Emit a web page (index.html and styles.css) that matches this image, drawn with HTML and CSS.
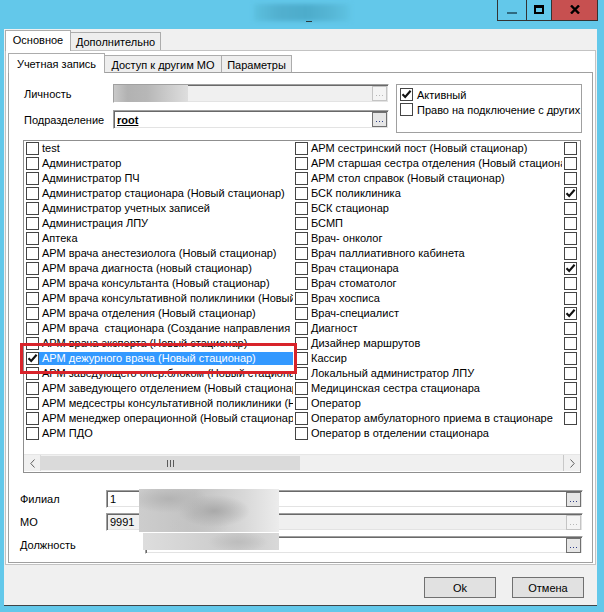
FILE: index.html
```html
<!DOCTYPE html>
<html lang="ru">
<head>
<meta charset="utf-8">
<title>Учетная запись</title>
<link rel="stylesheet" href="styles.css">
</head>
<body>
<div class="window">
  <div class="titlebar">
    <div class="title">
      <div class="title-blur"></div>
      <div class="title-mark"></div>
    </div>
    <div class="controls">
      <div class="ctl ctl-min"><span class="min-glyph"></span></div>
      <div class="ctl ctl-max"><span class="max-glyph"></span></div>
      <div class="ctl ctl-close">
        <svg width="10" height="9" viewBox="0 0 10 9"><path d="M1 0.5 L9 8.5 M9 0.5 L1 8.5" stroke="#000" stroke-width="2.4" fill="none"/></svg>
      </div>
    </div>
  </div>

  <div class="client">
    <div class="tabs outer-tabs">
      <div class="tab sel t-main">Основное</div>
      <div class="tab t-extra">Дополнительно</div>
    </div>
    <div class="outer-panel">
      <div class="tabs inner-tabs">
        <div class="tab sel t-acc">Учетная запись</div>
        <div class="tab t-access">Доступ к другим МО</div>
        <div class="tab t-params">Параметры</div>
      </div>
      <div class="inner-panel">
        <div class="top">
          <div class="form-rows">
            <div class="lbl">Личность</div>
            <div class="field disabled">
              <div class="person-blur"></div>
              <div class="fill"></div>
              <div class="dots-btn off"><svg width="13" height="13" viewBox="0 0 13 13"><rect x="3" y="8" width="1" height="1"/><rect x="6" y="8" width="1" height="1"/><rect x="9" y="8" width="1" height="1"/></svg></div>
            </div>
            <div class="lbl">Подразделение</div>
            <div class="field">
              <div class="fill"><span class="root">root</span></div>
              <div class="dots-btn"><svg width="13" height="13" viewBox="0 0 13 13"><rect x="3" y="8" width="1" height="1"/><rect x="6" y="8" width="1" height="1"/><rect x="9" y="8" width="1" height="1"/></svg></div>
            </div>
          </div>
          <div class="groupbox">
            <div class="gb-row"><span class="cb checked"><svg width="11" height="11" viewBox="0 0 11 11"><path d="M1.5 5.2 L4.2 8 L9.6 1.8" stroke="#111" stroke-width="2.1" fill="none"/></svg></span><span class="gb-text">Активный</span></div>
            <div class="gb-row"><span class="cb"></span><span class="gb-text">Право на подключение с других МО</span></div>
          </div>
        </div>

        <div class="list">
          <div class="cols">
            <div class="col">
              <div class="row"><span class="cb"></span><span class="txt">test</span></div>
              <div class="row"><span class="cb"></span><span class="txt">Администратор</span></div>
              <div class="row"><span class="cb"></span><span class="txt">Администратор ПЧ</span></div>
              <div class="row"><span class="cb"></span><span class="txt">Администратор стационара (Новый стационар)</span></div>
              <div class="row"><span class="cb"></span><span class="txt">Администратор учетных записей</span></div>
              <div class="row"><span class="cb"></span><span class="txt">Администрация ЛПУ</span></div>
              <div class="row"><span class="cb"></span><span class="txt">Аптека</span></div>
              <div class="row"><span class="cb"></span><span class="txt">АРМ врача анестезиолога (Новый стационар)</span></div>
              <div class="row"><span class="cb"></span><span class="txt">АРМ врача диагноста (новый стационар)</span></div>
              <div class="row"><span class="cb"></span><span class="txt">АРМ врача консультанта (Новый стационар)</span></div>
              <div class="row"><span class="cb"></span><span class="txt">АРМ врача консультативной поликлиники (Новый стационар)</span></div>
              <div class="row"><span class="cb"></span><span class="txt">АРМ врача отделения (Новый стационар)</span></div>
              <div class="row"><span class="cb"></span><span class="txt">АРМ врача &nbsp;стационара (Создание направления на госпитализацию)</span></div>
              <div class="row"><span class="cb"></span><span class="txt">АРМ врача эксперта (Новый стационар)</span></div>
              <div class="row"><span class="cb checked"><svg width="11" height="11" viewBox="0 0 11 11"><path d="M1.5 5.2 L4.2 8 L9.6 1.8" stroke="#111" stroke-width="2.1" fill="none"/></svg></span><span class="txt sel">АРМ дежурного врача (Новый стационар)</span></div>
              <div class="row"><span class="cb"></span><span class="txt">АРМ заведующего опер.блоком (Новый стационар)</span></div>
              <div class="row"><span class="cb"></span><span class="txt">АРМ заведующего отделением (Новый стационар)</span></div>
              <div class="row"><span class="cb"></span><span class="txt">АРМ медсестры консультативной поликлиники (Новый стационар)</span></div>
              <div class="row"><span class="cb"></span><span class="txt">АРМ менеджер операционной (Новый стационар)</span></div>
              <div class="row"><span class="cb"></span><span class="txt">АРМ ПДО</span></div>
            </div>
            <div class="col">
              <div class="row"><span class="cb"></span><span class="txt">АРМ сестринский пост (Новый стационар)</span></div>
              <div class="row"><span class="cb"></span><span class="txt">АРМ старшая сестра отделения (Новый стационар)</span></div>
              <div class="row"><span class="cb"></span><span class="txt">АРМ стол справок (Новый стационар)</span></div>
              <div class="row"><span class="cb"></span><span class="txt">БСК поликлиника</span></div>
              <div class="row"><span class="cb"></span><span class="txt">БСК стационар</span></div>
              <div class="row"><span class="cb"></span><span class="txt">БСМП</span></div>
              <div class="row"><span class="cb"></span><span class="txt">Врач- онколог</span></div>
              <div class="row"><span class="cb"></span><span class="txt">Врач паллиативного кабинета</span></div>
              <div class="row"><span class="cb"></span><span class="txt">Врач стационара</span></div>
              <div class="row"><span class="cb"></span><span class="txt">Врач стоматолог</span></div>
              <div class="row"><span class="cb"></span><span class="txt">Врач хосписа</span></div>
              <div class="row"><span class="cb"></span><span class="txt">Врач-специалист</span></div>
              <div class="row"><span class="cb"></span><span class="txt">Диагност</span></div>
              <div class="row"><span class="cb"></span><span class="txt">Дизайнер маршрутов</span></div>
              <div class="row"><span class="cb"></span><span class="txt">Кассир</span></div>
              <div class="row"><span class="cb"></span><span class="txt">Локальный администратор ЛПУ</span></div>
              <div class="row"><span class="cb"></span><span class="txt">Медицинская сестра стационара</span></div>
              <div class="row"><span class="cb"></span><span class="txt">Оператор</span></div>
              <div class="row"><span class="cb"></span><span class="txt">Оператор амбулаторного приема в стационаре</span></div>
              <div class="row"><span class="cb"></span><span class="txt">Оператор в отделении стационара</span></div>
            </div>
            <div class="col col-last">
              <div class="row"><span class="cb"></span></div>
              <div class="row"><span class="cb"></span></div>
              <div class="row"><span class="cb"></span></div>
              <div class="row"><span class="cb checked"><svg width="11" height="11" viewBox="0 0 11 11"><path d="M1.5 5.2 L4.2 8 L9.6 1.8" stroke="#111" stroke-width="2.1" fill="none"/></svg></span></div>
              <div class="row"><span class="cb"></span></div>
              <div class="row"><span class="cb"></span></div>
              <div class="row"><span class="cb"></span></div>
              <div class="row"><span class="cb"></span></div>
              <div class="row"><span class="cb checked"><svg width="11" height="11" viewBox="0 0 11 11"><path d="M1.5 5.2 L4.2 8 L9.6 1.8" stroke="#111" stroke-width="2.1" fill="none"/></svg></span></div>
              <div class="row"><span class="cb"></span></div>
              <div class="row"><span class="cb"></span></div>
              <div class="row"><span class="cb checked"><svg width="11" height="11" viewBox="0 0 11 11"><path d="M1.5 5.2 L4.2 8 L9.6 1.8" stroke="#111" stroke-width="2.1" fill="none"/></svg></span></div>
              <div class="row"><span class="cb"></span></div>
              <div class="row"><span class="cb"></span></div>
              <div class="row"><span class="cb"></span></div>
              <div class="row"><span class="cb"></span></div>
              <div class="row"><span class="cb"></span></div>
              <div class="row"><span class="cb"></span></div>
              <div class="row"><span class="cb"></span></div>
            </div>
          </div>
          <div class="hscroll">
            <div class="sarrow"><svg width="5" height="9" viewBox="0 0 5 9"><path d="M4.5 0.5 L0.8 4.5 L4.5 8.5" stroke="#606060" stroke-width="1" fill="none"/></svg></div>
            <div class="thumb"><span class="grip"></span><span class="grip"></span><span class="grip"></span></div>
            <div class="track"></div>
            <div class="sarrow right"><svg width="5" height="9" viewBox="0 0 5 9"><path d="M0.5 0.5 L4.2 4.5 L0.5 8.5" stroke="#606060" stroke-width="1" fill="none"/></svg></div>
          </div>
        </div>

        <div class="bottom">
          <div class="lbl">Филиал</div>
          <div class="field"><div class="fill">1</div><div class="dots-btn"><svg width="13" height="13" viewBox="0 0 13 13"><rect x="3" y="8" width="1" height="1"/><rect x="6" y="8" width="1" height="1"/><rect x="9" y="8" width="1" height="1"/></svg></div></div>
          <div class="lbl">МО</div>
          <div class="field disabled"><div class="fill">9991</div><div class="dots-btn off"><svg width="13" height="13" viewBox="0 0 13 13"><rect x="3" y="8" width="1" height="1"/><rect x="6" y="8" width="1" height="1"/><rect x="9" y="8" width="1" height="1"/></svg></div></div>
          <div class="lbl">Должность</div>
          <div class="field post"><div class="fill"></div><div class="dots-btn"><svg width="13" height="13" viewBox="0 0 13 13"><rect x="3" y="8" width="1" height="1"/><rect x="6" y="8" width="1" height="1"/><rect x="9" y="8" width="1" height="1"/></svg></div></div>
        </div>

        <div class="blur-a"></div>
        <div class="blur-b"></div>
        <div class="mark"></div>
      </div>
    </div>
    <div class="footer">
      <button class="btn">Ok</button>
      <button class="btn">Отмена</button>
    </div>
  </div>
</div>
</body>
</html>
```

FILE: styles.css
```css
* { box-sizing: border-box; margin: 0; padding: 0; }
html, body { width: 604px; height: 612px; overflow: hidden; }
body {
  background: #63c8ea;
  font-family: "Liberation Sans", Arial, sans-serif;
  font-size: 11px;
  letter-spacing: 0;
  color: #000;
}
.window { width: 604px; height: 612px; display: flex; flex-direction: column; }

/* title bar */
.titlebar { height: 29px; flex: none; display: flex; align-items: flex-start; }
.title { position: relative; margin: 4px 0 0 254px; width: 96px; height: 17px; }
.title-blur {
  width: 96px; height: 17px;
  background: linear-gradient(90deg, #5cc0df 0%, #52b0cf 25%, #4daccb 55%, #56b6d5 80%, #5fc3e3 100%);
  filter: blur(2px);
}
.title-mark { position: absolute; left: 52px; top: 17px; width: 6px; height: 1px; background: #2a3b40; }
.controls { margin-left: auto; margin-right: 6px; display: flex; height: 21px; }
.ctl {
  height: 21px; border: 1px solid #333; border-top: none;
  display: flex; align-items: center; justify-content: center;
}
.ctl + .ctl { margin-left: -1px; }
.ctl-min { width: 30px; }
.ctl-max { width: 26px; }
.ctl-close { width: 47px; background: #c75050; }
.min-glyph { width: 10px; height: 2px; background: #2f6a80; margin-top: 5px; }
.max-glyph { width: 10px; height: 9px; border: 2px solid #000; border-top-width: 3px; margin-top: -1px; }
.ctl-close svg { margin-top: -1px; }

/* client area */
.client {
  margin-left: 4px; width: 593px; height: 577px; flex: none;
  background: #f0f0f0; border-bottom: 1px solid #3f4548;
  display: flex; flex-direction: column;
}
.tabs { display: flex; align-items: flex-end; flex: none; }
.outer-tabs { height: 21px; padding-left: 1px; }
.inner-tabs { height: 20px; }
.tab {
  border: 1px solid #acacac; border-bottom: none;
  background: #eeeeee; text-align: center; white-space: nowrap;
  line-height: 15px;
}
.tab + .tab { margin-left: -1px; }
.tab.sel {
  position: relative; z-index: 1; background: #fff; margin-bottom: -1px;
}
.outer-tabs .tab { height: 18px; padding-top: 2px; }
.outer-tabs .tab.sel { height: 21px; padding-top: 2px; }
.t-main { width: 66px; }
.t-extra { width: 91px; }
.inner-tabs .tab { height: 17px; padding-top: 2px; }
.inner-tabs .tab.sel { height: 20px; padding-top: 3px; }
.t-acc { width: 97px; }
.t-access { width: 118px; }
.t-params { width: 71px; }

.outer-panel {
  margin-left: 1px; width: 591px; height: 515px; flex: none;
  background: #fff; border: 1px solid #c3c3c3;
  padding: 1px 2px 2px 2px;
  display: flex; flex-direction: column;
}
.inner-panel {
  position: relative;
  width: 585px; height: 491px; flex: none;
  background: #fff; border: 1px solid #a0a0a0;
}

/* top form */
.top { display: flex; padding: 11px 0 0 15px; }
.form-rows { display: grid; grid-template-columns: 89px 276px; grid-template-rows: 19px 19px; row-gap: 7px; }
.lbl { display: flex; align-items: center; white-space: nowrap; }
.field {
  display: flex; align-items: center; overflow: hidden; position: relative;
  background: #fff;
  border: 1px solid; border-color: #a0a0a0 #fff #fff #a0a0a0;
  box-shadow: inset 1px 1px 0 #696969, inset -1px -1px 0 #e3e3e3;
}
.field.disabled { background: #f0f0f0; }
.fill { flex: 1; padding-left: 3px; white-space: nowrap; overflow: hidden; }
.root { font-weight: bold; text-decoration: underline; }
.person-blur {
  width: 74px; align-self: stretch; margin: 0;
  background: linear-gradient(90deg, #c9c9c9 0%, #b2b2b2 18%, #b7b7b7 45%, #c9c9c9 70%, #dedede 100%);
}
.dots-btn {
  width: 15px; height: 15px; margin-right: 1px; flex: none;
  border: 1px solid #707070; background: #e6e6e6;
  display: flex; align-items: center; justify-content: center;
}
.dots-btn svg rect { fill: #30408a; }
.dots-btn.off { border-color: #c4c4c4; background: #f4f4f4; }
.dots-btn.off svg rect { fill: #b8b8b8; }

.groupbox {
  margin-left: 7px; width: 186px; height: 49px;
  border: 1px solid #a0a0a0; padding: 2px 0 0 3px; overflow: hidden;
}
.gb-row { display: flex; align-items: center; height: 15px; white-space: nowrap; }
.gb-text { margin-left: 4px; }

/* checkbox */
.cb {
  width: 13px; height: 13px; flex: none;
  border: 1px solid #444; background: #fff;
  display: flex; align-items: center; justify-content: center;
}

/* list */
.list {
  margin: 7px 0 0 14px; width: 558px; height: 333px;
  border: 1px solid #8f8f8f; display: flex; flex-direction: column; overflow: hidden;
}
.cols { display: flex; height: 313px; flex: none; overflow: hidden; }
.col { width: 269px; flex: none; overflow: hidden; }
.col-last { flex: 1; width: auto; }
.row { height: 15px; display: flex; align-items: flex-start; padding-top: 1px; padding-left: 2px; }
.txt {
  flex: 1; min-width: 0; height: 13px; line-height: 13px;
  padding-left: 3px; white-space: nowrap; overflow: hidden;
}
.txt.sel { background: #3399ff; color: #fff; }

.hscroll { height: 17px; display: flex; flex: none; background: #f0f0f0; border-top: 1px solid #e6e6e6; }
.sarrow { width: 17px; flex: none; display: flex; align-items: center; justify-content: center; border-right: 1px solid #dadada; }
.sarrow.right { border-right: none; border-left: 1px solid #c8c8c8; }
.thumb {
  width: 259px; flex: none; margin: 1px 0; background: #dadada;
  display: flex; align-items: center; justify-content: center; gap: 2px;
}
.grip { width: 1px; height: 7px; background: #5a5a5a; }
.track { flex: 1; }

/* bottom form */
.bottom {
  margin-top: 17px; padding-left: 11px;
  display: grid; grid-template-columns: 86px 477px; grid-template-rows: 18px 18px 18px; row-gap: 5px;
}
.field.post { margin-left: 39px; }

/* overlays: blurred personal data and the red annotation */
.blur-a {
  position: absolute; left: 130px; top: 416px; width: 140px; height: 43px;
  background:
    radial-gradient(ellipse 40px 14px at 30px 10px, #b3b3b3, rgba(180,180,180,0) 100%),
    radial-gradient(ellipse 36px 16px at 75px 22px, #a9a9a9, rgba(170,170,170,0) 100%),
    radial-gradient(ellipse 30px 12px at 60px 36px, #c4c4c4, rgba(200,200,200,0) 100%),
    linear-gradient(90deg, #cdcdcd 0%, #c2c2c2 40%, #d8d8d8 75%, #ececec 100%);
}
.blur-b {
  position: absolute; left: 134px; top: 460px; width: 136px; height: 17px;
  background:
    radial-gradient(ellipse 30px 10px at 95px 9px, #bdbdbd, rgba(190,190,190,0) 100%),
    linear-gradient(90deg, #dddddd 0%, #d2d2d2 40%, #c9c9c9 70%, #d9d9d9 100%);
}
.mark {
  position: absolute; left: 11px; top: 270px; width: 277px; height: 31px;
  border: 3px solid #d8232a;
}

/* footer */
.footer { display: flex; justify-content: flex-end; gap: 16px; padding: 12px 13px 0 0; }
.btn {
  width: 72px; height: 21px;
  font-family: "Liberation Sans", Arial, sans-serif; font-size: 11px; color: #000;
  background: #e1e1e1; border: 1px solid #707070;
}
```
